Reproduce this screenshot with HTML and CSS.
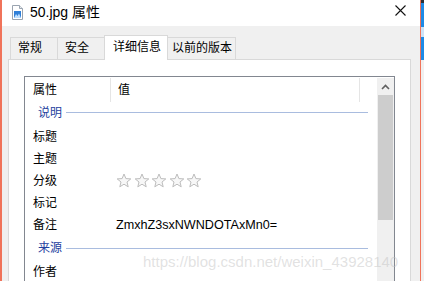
FILE: index.html
```html
<!DOCTYPE html>
<html>
<head>
  <meta charset="utf-8">
  <title>50.jpg 属性</title>
  <link rel="stylesheet" href="styles.css">
</head>
<body>
  <div class="screen">
    <div class="edgeLeft"></div>

    <div class="window">
      <div class="titleBar">
        <svg class="fileIcon" width="11" height="15" viewBox="0 0 11 15">
          <path d="M0.5 0.5 H7.5 L10.5 3.5 V14.5 H0.5 Z" fill="#fff" stroke="#9aa4b0"/>
          <path d="M7.5 0.5 V3.5 H10.5" fill="#e8ecf0" stroke="#9aa4b0"/>
          <rect x="2" y="6" width="7" height="7" fill="#2f7fd8"/>
          <path d="M2 13 L4 9 L5.5 11 L7 8.5 L9 13 Z" fill="#bfe0ff"/>
        </svg>
        <span class="title">50.jpg 属性</span>
        <svg class="closeIcon" width="11" height="11" viewBox="0 0 11 11">
          <path d="M0.5 0.5 L10.5 10.5 M10.5 0.5 L0.5 10.5" stroke="#111" stroke-width="1.1"/>
        </svg>
      </div>

      <div class="client">
        <div class="tabs">
          <div class="tab tabNarrow">常规</div>
          <div class="tab tabNarrow">安全</div>
          <div class="tab tabActive">详细信息</div>
          <div class="tab tabWide">以前的版本</div>
        </div>

        <div class="panel">
          <div class="listView">
            <div class="lvMain">
              <div class="lvHeader">
                <div class="colName">属性</div>
                <div class="colValue">值</div>
              </div>

              <div class="groupRow">
                <span class="groupLabel">说明</span>
                <span class="groupLine"></span>
              </div>
              <div class="row"><div class="cellName">标题</div><div class="cellValue"></div></div>
              <div class="row"><div class="cellName">主题</div><div class="cellValue"></div></div>
              <div class="row">
                <div class="cellName">分级</div>
                <div class="cellValue stars">
                  <svg width="16" height="15" viewBox="0 0 16 15"><polygon class="star" points="8,1 9.9,5.6 14.8,5.9 11,9 12.2,13.8 8,11.2 3.8,13.8 5,9 1.2,5.9 6.1,5.6"/></svg>
                  <svg width="16" height="15" viewBox="0 0 16 15"><polygon class="star" points="8,1 9.9,5.6 14.8,5.9 11,9 12.2,13.8 8,11.2 3.8,13.8 5,9 1.2,5.9 6.1,5.6"/></svg>
                  <svg width="16" height="15" viewBox="0 0 16 15"><polygon class="star" points="8,1 9.9,5.6 14.8,5.9 11,9 12.2,13.8 8,11.2 3.8,13.8 5,9 1.2,5.9 6.1,5.6"/></svg>
                  <svg width="16" height="15" viewBox="0 0 16 15"><polygon class="star" points="8,1 9.9,5.6 14.8,5.9 11,9 12.2,13.8 8,11.2 3.8,13.8 5,9 1.2,5.9 6.1,5.6"/></svg>
                  <svg width="16" height="15" viewBox="0 0 16 15"><polygon class="star" points="8,1 9.9,5.6 14.8,5.9 11,9 12.2,13.8 8,11.2 3.8,13.8 5,9 1.2,5.9 6.1,5.6"/></svg>
                </div>
              </div>
              <div class="row"><div class="cellName">标记</div><div class="cellValue"></div></div>
              <div class="row"><div class="cellName">备注</div><div class="cellValue latin">ZmxhZ3sxNWNDOTAxMn0=</div></div>

              <div class="groupRow groupSecond">
                <span class="groupLabel">来源</span>
                <span class="groupLine"></span>
              </div>
              <div class="row"><div class="cellName">作者</div><div class="cellValue"></div></div>
            </div>

            <div class="scrollBar">
              <div class="scrollUp">
                <svg width="9" height="6" viewBox="0 0 9 6"><path d="M1 5 L4.5 1.5 L8 5" fill="none" stroke="#606060" stroke-width="1.6"/></svg>
              </div>
              <div class="scrollThumb"></div>
              <div class="scrollTrack"></div>
            </div>
          </div>
        </div>
      </div>
    </div>

    <div class="edgeRight"></div>
    <div class="desktop">
      <div class="deskDark"></div>
      <div class="deskBlue"></div>
      <div class="deskLight"></div>
      <div class="deskBlue2"></div>
      <div class="deskGray"></div>
    </div>

    <div class="watermark">https://blog.csdn.net/weixin_43928140</div>
  </div>
</body>
</html>
```

FILE: styles.css
```css
*{
  margin: 0;
  padding: 0;
  box-sizing: border-box;
}

body{
  width: 424px;
  height: 281px;
  overflow: hidden;
  background: #f0f0f0;
  font-family: "Liberation Sans", "Noto Sans CJK SC", sans-serif;
  font-size: 12px;
  color: #000;
}

.screen{
  position: relative;
  display: flex;
  height: 281px;
  overflow: hidden;
}

.edgeLeft{
  width: 2px;
  background: #f0735a;
}

.edgeRight{
  width: 1px;
  background: #f0735a;
}

.desktop{
  width: 3px;
  display: flex;
  flex-direction: column;
}
.deskDark{ height: 3px; background: #2a2f36; flex-shrink: 0; }
.deskBlue{ height: 24px; background: #1e8ae6; flex-shrink: 0; }
.deskLight{ height: 10px; background: #cde3f8; flex-shrink: 0; }
.deskBlue2{ height: 23px; background: #1e8ae6; flex-shrink: 0; }
.deskGray{
  flex: 1;
  background: #f0f0f0;
}

/* window */
.window{
  width: 418px;
  display: flex;
  flex-direction: column;
  background: #f0f0f0;
  overflow: hidden;
}

.titleBar{
  flex-shrink: 0;
  height: 26px;
  background: #fff;
  display: flex;
  align-items: center;
  padding-left: 10px;
}

.fileIcon{
  margin-top: -1px;
}

.title{
  margin-left: 7px;
  margin-top: -2px;
  font-size: 14px;
  line-height: 18px;
}

.closeIcon{
  margin-left: auto;
  margin-right: 14px;
  margin-top: -6px;
}

.client{
  flex: 1;
  display: flex;
  flex-direction: column;
  padding: 9px 9px 0 6px;
}

/* tabs */
.tabs{
  flex-shrink: 0;
  display: flex;
  align-items: flex-end;
  padding-left: 2px;
  height: 24px;
}

.tab{
  height: 22px;
  border: 1px solid #d9d9d9;
  border-bottom: none;
  margin-left: -1px;
  background: #f0f0f0;
  line-height: 21px;
  padding-left: 7px;
  white-space: nowrap;
}
.tab:first-child{
  margin-left: 0;
}

.tabNarrow{ width: 48px; }
.tabWide{ width: 69px; padding-left: 4px; }

.tabActive{
  position: relative;
  z-index: 1;
  width: 64px;
  height: 25px;
  margin-bottom: -1px;
  background: #fff;
  line-height: 22px;
  padding-left: 8px;
}

.panel{
  flex: 1;
  background: #fff;
  border: 1px solid #d9d9d9;
  border-bottom: none;
  padding: 16px 15px 0 15px;
}

/* list view */
.listView{
  display: flex;
  border: 1px solid #828790;
  border-bottom: none;
  height: 230px;
}

.lvMain{
  flex: 1;
}

.lvHeader{
  display: flex;
  height: 25px;
  line-height: 24px;
}

.colName{
  width: 86px;
  padding-left: 8px;
  border-right: 1px solid #e5e5e5;
  margin: 1px 0 0;
}

.colValue{
  width: 249px;
  padding-left: 7px;
  border-right: 1px solid #e5e5e5;
  margin: 1px 0 0;
}

.groupRow{
  display: flex;
  align-items: center;
  height: 21px;
  padding-left: 13px;
}

.groupSecond{
  height: 25px;
  padding-top: 5px;
}

.groupLabel{
  color: #1e3fa0;
  line-height: 16px;
}

.groupLine{
  flex: 1;
  height: 1px;
  background: #a9bcdf;
  margin-left: 4px;
  margin-right: 9px;
}

.row{
  display: flex;
  height: 22px;
  padding-top: 3px;
  line-height: 22px;
}

.cellName{
  width: 85px;
  padding-left: 8px;
}

.cellValue{
  flex: 1;
  padding-left: 7px;
}

.latin{
  font-size: 12.6px;
  padding-left: 6px;
}

.stars{
  display: flex;
  align-items: center;
  gap: 1.5px;
  padding-left: 6px;
  margin-top: 1px;
}

.star{
  fill: #f7f7f7;
  stroke: #bdbdbd;
  stroke-width: 1;
}

/* scrollbar */
.scrollBar{
  width: 17px;
  display: flex;
  flex-direction: column;
  background: #f0f0f0;
  margin-top: 1px;
}

.scrollUp{
  flex-shrink: 0;
  height: 17px;
  display: flex;
  align-items: center;
  justify-content: center;
}

.scrollThumb{
  flex-shrink: 0;
  height: 125px;
  background: #cdcdcd;
  margin: 0 1px;
}

.scrollTrack{
  flex: 1;
}

.watermark{
  position: absolute;
  left: 143px;
  top: 253px;
  font-size: 15px;
  line-height: 18px;
  color: rgba(190, 190, 190, 0.45);
  white-space: nowrap;
}
```
